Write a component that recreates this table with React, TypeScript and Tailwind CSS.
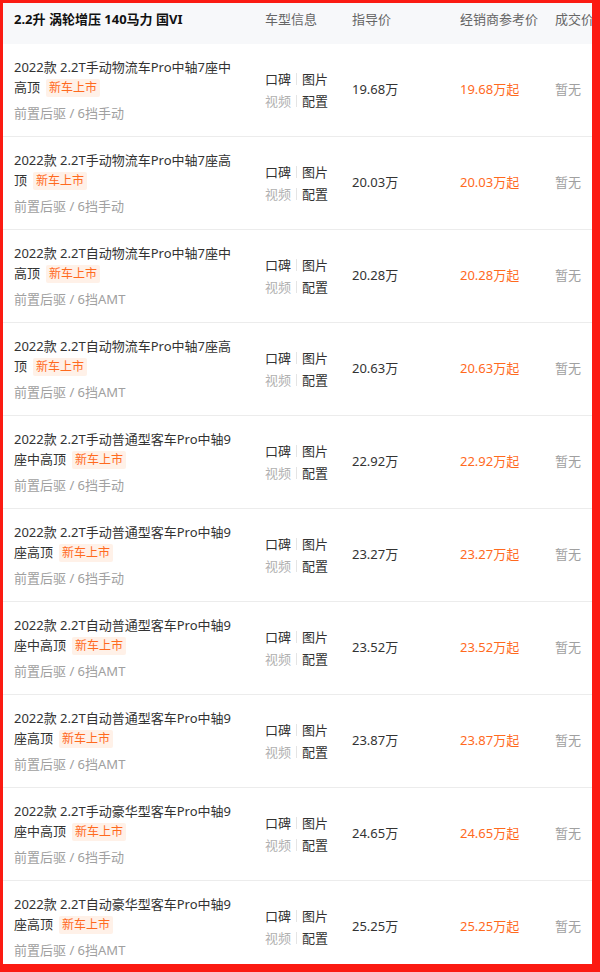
import React from "react";

type Row = { name: string; spec: string; price: string };

const rows: Row[] = [
  { name: "2022款 2.2T手动物流车Pro中轴7座中高顶", spec: "6挡手动", price: "19.68" },
  { name: "2022款 2.2T手动物流车Pro中轴7座高顶", spec: "6挡手动", price: "20.03" },
  { name: "2022款 2.2T自动物流车Pro中轴7座中高顶", spec: "6挡AMT", price: "20.28" },
  { name: "2022款 2.2T自动物流车Pro中轴7座高顶", spec: "6挡AMT", price: "20.63" },
  { name: "2022款 2.2T手动普通型客车Pro中轴9座中高顶", spec: "6挡手动", price: "22.92" },
  { name: "2022款 2.2T手动普通型客车Pro中轴9座高顶", spec: "6挡手动", price: "23.27" },
  { name: "2022款 2.2T自动普通型客车Pro中轴9座中高顶", spec: "6挡AMT", price: "23.52" },
  { name: "2022款 2.2T自动普通型客车Pro中轴9座高顶", spec: "6挡AMT", price: "23.87" },
  { name: "2022款 2.2T手动豪华型客车Pro中轴9座中高顶", spec: "6挡手动", price: "24.65" },
  { name: "2022款 2.2T自动豪华型客车Pro中轴9座高顶", spec: "6挡AMT", price: "25.25" },
];

const font = { fontFamily: '"Noto Sans", "Noto Sans CJK SC", sans-serif' };

function Links() {
  return (
    <div className="flex flex-col gap-[2px] text-[13px] leading-[20px]">
      <div className="flex items-center">
        <span className="text-[#333]">口碑</span>
        <span className="mx-[5px] h-[12px] w-px bg-[#e5e5e5]" />
        <span className="text-[#333]">图片</span>
      </div>
      <div className="flex items-center">
        <span className="text-[#b0b0b0]">视频</span>
        <span className="mx-[5px] h-[12px] w-px bg-[#e5e5e5]" />
        <span className="text-[#333]">配置</span>
      </div>
    </div>
  );
}

export default function App() {
  return (
    <div
      className="h-[972px] w-[600px] bg-[#fb1a12] pb-[8px] pl-[3px] pr-[8px] pt-[3px]"
      style={font}
    >
      <div className="h-full w-full overflow-hidden bg-white">
        <div className="w-[660px]">
          <div className="flex h-[41px] items-center bg-[#f7f8fa] pb-[7px] text-[13px] text-[#666]">
            <div className="w-[259px] pl-[11px] font-bold text-[#111]">
              2.2升 涡轮增压 140马力 国VI
            </div>
            <div className="w-[87px] pl-[3px]">车型信息</div>
            <div className="w-[108px] pl-[3px]">指导价</div>
            <div className="w-[95px] pl-[3px]">经销商参考价</div>
            <div className="w-[100px] pl-[3px]">成交价</div>
          </div>
          {rows.map((r, i) => (
            <div
              key={i}
              className="flex h-[93px] items-center border-b border-[#ececec] text-[13px]"
            >
              <div className="w-[259px] pl-[11px]">
                <div className="w-[226px] leading-[20px] text-[#333]">
                  {r.name}
                  <span className="ml-[6px] inline-block rounded-[2px] bg-[#fff1e8] px-[3px] text-[12px] leading-[18px] text-[#ff6a1e]">
                    新车上市
                  </span>
                </div>
                <div className="mt-[6px] leading-[20px] text-[#a0a0a0]">
                  前置后驱 / {r.spec}
                </div>
              </div>
              <div className="w-[87px] pl-[3px]">
                <Links />
              </div>
              <div className="w-[108px] pl-[3px] text-[#333]">{r.price}万</div>
              <div className="w-[95px] pl-[3px] text-[#ff6a1e]">{r.price}万起</div>
              <div className="w-[100px] pl-[3px] text-[#a0a0a0]">暂无</div>
            </div>
          ))}
        </div>
      </div>
    </div>
  );
}
